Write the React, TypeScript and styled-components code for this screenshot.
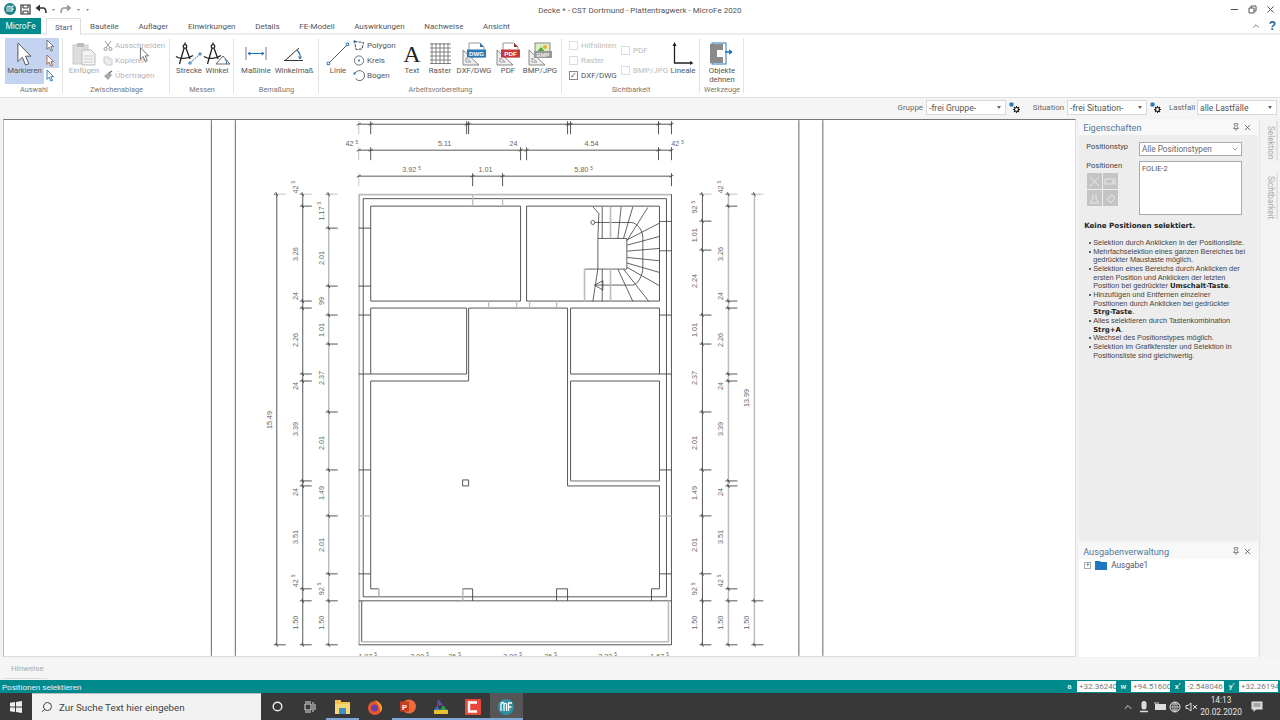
import React from "react";
import styled, { createGlobalStyle } from "styled-components";
import { ChevronUp, Search, X, Minus, Pin, ChevronDown } from "lucide-react";

const Global = createGlobalStyle`
  html, body { margin: 0; padding: 0; background: #f3f3f3; }
  * { box-sizing: border-box; }
`;
const UI = `Roboto, "Open Sans", sans-serif`;
const TEAL = "#008a8c";

const TextGlyph = styled.span`font-family: "Liberation Serif", serif; font-size: 24px; line-height: 24px; color: #222;`;
const Page = styled.div`
  width: 1280px; height: 720px; overflow: hidden; display: flex; flex-direction: column;
  font-family: ${UI}; font-size: 8.3px; color: #555; background: #f3f3f3; position: relative;
`;
const TitleBar = styled.div`
  height: 18px; background: #fff; display: grid; grid-template-columns: 1fr auto 1fr; align-items: center;
`;
const Quick = styled.div`display: flex; align-items: center; padding-left: 4px; gap: 4px;`;
const TitleText = styled.div`font-size: 8px; color: #555; padding-top: 2px;`;
const WinButtons = styled.div`display: flex; justify-content: flex-end; align-items: center; gap: 8px; padding-right: 4px; color: #444;`;
const TabBar = styled.div`
  height: 17px; background: #fff; display: flex; align-items: stretch; border-bottom: 2px solid #ededed; position: relative;
`;
const AppTab = styled.div`
  width: 41px; background: ${TEAL}; color: #e8ffff; font-size: 8.4px; display: flex; align-items: center; justify-content: center; margin-right: 5px; margin-bottom: -1px;
`;
const Tab = styled.div<{ $active?: boolean }>`
  display: flex; align-items: center; font-size: 8px; color: ${p => (p.$active ? "#45608a" : "#555")};
  padding: 2px 9.8px 0; height: ${p => (p.$active ? "17px" : "15px")}; white-space: nowrap;
  background: #fff; ${p => (p.$active ? "border: 1px solid #ddd; border-bottom: none; z-index: 1; padding: 1px 8px 0; margin-right: -1px;" : "")}
`;
const TabRight = styled.div`margin-left: auto; display: flex; align-items: center; gap: 8px; padding-right: 4px; color: #666;`;
const Help = styled.span`color: #1c5f96; font-weight: 700; font-size: 12px; line-height: 1; font-family: "Liberation Sans", sans-serif;`;

const Ribbon = styled.div`
  height: 63px; background: #fff; display: flex; padding-left: 5px; border-bottom: 1px solid #e0e0e0;
`;
const Group = styled.div<{ $w: number }>`
  width: ${p => p.$w}px; display: flex; flex-direction: column; position: relative;
  &::after { content: ""; position: absolute; right: 0; top: 3px; bottom: 4px; width: 1px; background: #e2e2e2; }
`;
const GroupBody = styled.div<{ $pl?: number }>`
  flex: 1; display: flex; padding-left: ${p => p.$pl ?? 0}px; min-height: 0;
`;
const GroupTitle = styled.div`height: 14px; text-align: center; font-size: 7.3px; color: #777; line-height: 14px;`;
const Tool = styled.div<{ $w: number; $sel?: boolean; $off?: boolean }>`
  width: ${p => p.$w}px; display: flex; flex-direction: column; align-items: center; padding-top: 2px;
  font-size: 7.8px; line-height: 8.5px; text-align: center; white-space: nowrap;
  color: ${p => (p.$off ? "#aaa" : "#555")};
  background: ${p => (p.$sel ? "#c4d3ef" : "transparent")};
  margin-top: 3px; height: 46px;
`;
const ToolIcon = styled.div`height: 27px; display: flex; align-items: center; justify-content: center;`;
const SmallCol = styled.div<{ $w: number }>`
  width: ${p => p.$w}px; display: flex; flex-direction: column; padding-top: 3px;
`;
const SmallRow = styled.div<{ $off?: boolean }>`
  height: 15px; display: flex; align-items: center; gap: 2px; white-space: nowrap; font-size: 8px;
  color: ${p => (p.$off ? "#b5b5b5" : "#555")};
`;
const SideSel = styled.div<{ $h: number }>`
  width: 15px; height: 45px; margin-top: 3px; position: relative; display: flex; flex-direction: column; align-items: center;
  &::before { content: ""; position: absolute; left: 0; top: 0; width: 15px; height: ${p => p.$h}px; background: #c4d3ef; }
`;
const SideCell = styled.div`height: 15px; display: flex; align-items: center; position: relative;`;
const CheckCol = styled.div<{ $w: number; $center?: boolean }>`
  width: ${p => p.$w}px; display: flex; flex-direction: column; padding-top: ${p => (p.$center ? "8px" : "3px")}; gap: ${p => (p.$center ? "5px" : "0")};
`;
const CheckRow = styled.div<{ $on?: boolean }>`
  height: 15px; display: flex; align-items: center; gap: 3px; font-size: 8px; white-space: nowrap; color: ${p => (p.$on ? "#555" : "#bbb")};
`;
const Box = styled.span<{ $on?: boolean }>`
  width: 9px; height: 9px; flex: none; border: 1px solid ${p => (p.$on ? "#888" : "#ddd")}; background: #fff; font-size: 8px; line-height: 7px; text-align: center; color: #555;
`;

const ToolBar = styled.div`
  height: 19px; display: flex; justify-content: flex-end; align-items: center; padding-right: 3px; background: #f5f5f5;
`;
const BarLabel = styled.span<{ $ml: number; $w: number }>`
  margin-left: ${p => p.$ml}px; width: ${p => p.$w}px; padding-right: 3px; text-align: right; font-size: 7.9px; color: #666; white-space: nowrap;
`;
const BarSelect = styled.div`
  width: 80px; height: 15px; background: #fff; border: 1px solid #d8d8d8; display: flex; align-items: center; justify-content: space-between;
  padding: 0 2px; font-size: 8.6px; color: #555;
`;
const Caret = styled.span`width: 0; height: 0; border-left: 2.5px solid transparent; border-right: 2.5px solid transparent; border-top: 3px solid #666; margin-right: 2px;`;
const GearSlot = styled.span`margin-left: 3px; display: flex;`;

const Main = styled.div`flex: 1; display: flex; min-height: 0; padding: 2px 0 1px 3px;`;
const Canvas = styled.div`
  width: 1074px; background: #fff; border-top: 1px solid #777; border-left: 1px solid #bbb; border-right: 1px solid #ddd; border-bottom: 1px solid #ddd; overflow: hidden; display: flex;
`;
const SideCol = styled.div`width: 179px; margin-left: 3px; display: flex; flex-direction: column; gap: 3px;`;
const Panel = styled.div<{ $white?: boolean; $h?: number }>`
  ${p => (p.$h ? `height:${p.$h}px;` : "flex: 1;")} background: ${p => (p.$white ? "#fff" : "#ededed")}; display: flex; flex-direction: column;
`;
const PanelHead = styled.div`
  height: 16px; background: #f8f8f8; display: flex; align-items: center; justify-content: space-between; padding: 0 6px 0 4px;
  font-size: 9.2px; color: #56799a;
`;
const HeadBtns = styled.div`display: flex; align-items: center; gap: 3px; color: #444;`;
const PanelBody = styled.div`padding: 7px 5px 0 7px; display: flex; flex-direction: column;`;
const FieldRow = styled.div`display: flex; justify-content: space-between; margin-right: 11px;`;
const FieldLabel = styled.div`font-size: 7.6px; color: #444;`;
const TypeSelect = styled.div`
  width: 103px; height: 14px; background: #fff; border: 1px solid #aaa; display: flex; justify-content: space-between; align-items: center; padding: 0 2px; font-size: 8.2px; color: #666;
`;
const PosRow = styled(FieldRow)`margin-top: 5px;`;
const PosLeft = styled.div`display: flex; flex-direction: column; gap: 3px;`;
const BtnGrid = styled.div`display: grid; grid-template-columns: 15px 15px; grid-auto-rows: 16px; gap: 1px; margin-left: 1px;`;
const GrayBtn = styled.div`background: #c4c4c4; display: flex; align-items: center; justify-content: center; color: #e9e9e9;`;
const ListBox = styled.div`
  width: 103px; height: 54px; background: #fff; border: 1px solid #aaa; padding: 2px; font-size: 7.4px; color: #555;
`;
const Heading = styled.div`
  margin: 5px 0 0 -2px; height: 11px; font-family: "DejaVu Sans", sans-serif; font-weight: 700; font-size: 7.1px; color: #222; line-height: 11px;
`;
const HelpList = styled.ul`
  list-style: none; padding: 0; margin: 8px 0 0 3px; font-family: "Liberation Sans", sans-serif; font-size: 7.35px; line-height: 8.67px; color: #444; white-space: nowrap;
`;
const HelpItem = styled.li`
  padding-left: 4px; position: relative;
  &::before { content: ""; position: absolute; left: 0; top: 3px; width: 2px; height: 2px; border-radius: 50%; background: #333; }
`;
const Strong = styled.b`font-family: "DejaVu Sans", sans-serif; font-size: 6.9px; color: #222;`;
const TreeRow = styled.div`display: flex; align-items: center; padding: 1px 0 0 5px; gap: 4px; font-size: 8.3px; color: #556;`;
const Plus = styled.span`width: 7px; height: 7px; border: 1px solid #aaa; font-size: 7px; line-height: 5px; text-align: center; color: #666;`;
const VStrip = styled.div`width: 21px; margin-left: 1px; display: flex; flex-direction: column; border-left: 1px solid #e4e4e4; padding-top: 2px;`;
const VTab = styled.div<{ $h: number }>`
  width: 18px; height: ${p => p.$h}px; writing-mode: vertical-rl; font-size: 8.2px; color: #aaa; padding: 3px 0 0 0; border-right: 2px solid #e2e2e2; margin-bottom: 12px; display: flex; align-items: flex-start; justify-content: center;
`;
const Hints = styled.div`
  height: 22px; background: #f5f5f5; padding: 6px 0 0 11px; font-size: 8px; color: #aaa; position: relative;
  &::after { content: ""; position: absolute; left: 3px; bottom: 1px; width: 44px; height: 1px; background: #ddd; }
`;
const Status = styled.div`
  height: 13px; background: ${TEAL}; display: flex; align-items: center; color: #eef; font-size: 8.1px; padding: 0 2px;
`;
const StatusRight = styled.div`margin-left: auto; display: flex; align-items: center;`;
const StatLabel = styled.span`width: 15px; text-align: center; color: #cfeeee; font-weight: 700; font-size: 8px;`;
const StatBox = styled.span`
  width: 39px; height: 11px; background: #fff; color: #777; font-size: 8px; line-height: 11px; padding-left: 2px; overflow: hidden; white-space: nowrap;
`;
const Taskbar = styled.div`height: 27px; background: #383838; display: flex; align-items: stretch;`;
const StartBtn = styled.div`width: 32px; display: flex; align-items: center; justify-content: center;`;
const SearchBox = styled.div`
  width: 229px; background: #f2f2f2; display: flex; align-items: center; gap: 6px; padding-left: 9px; font-size: 9.8px; color: #444; border-top: 1px solid #bbb;
`;
const TaskBtn = styled.div<{ $run?: boolean; $active?: boolean }>`
  width: 32.7px; display: flex; align-items: center; justify-content: center;
  background: ${p => (p.$active ? "#565656" : "transparent")};
  box-shadow: ${p => (p.$run ? "inset 0 -2px 0 #7fa6d8" : "none")};
`;
const Tray = styled.div`margin-left: auto; display: flex; align-items: center; color: #ddd;`;
const TrayIcon = styled.div`width: 15.7px; display: flex; justify-content: center;`;
const Clock = styled.div`width: 42px; margin-left: 1px; text-align: center; font-size: 8.3px; line-height: 11.5px; color: #e6e6e6;`;
const Notify = styled.div`width: 38px; padding: 0 10px 0 2px; display: flex; justify-content: center;`;
const Cursor = styled.svg`position: absolute; left: 139px; top: 47px;`;

/* ------ icons ------ */
const arrow = "M0 0L0 17L4 13L7 20L10 19L7 12L12 12Z";
const MiniArrow = ({ s = 0.55, c = "#666" }: { s?: number; c?: string }) => (
  <svg width="13" height="13" viewBox="0 0 13 13">
    <path d={arrow} transform={`translate(2 1) scale(${s})`} fill="#fff" stroke={c} strokeWidth="1.6" />
  </svg>
);
const BigCursor = () => (
  <svg width="18" height="24" viewBox="-1 -1 15 22">
    <path d={arrow} fill="#fff" stroke="#555" strokeWidth="0.9" />
  </svg>
);
const Compass = ({ children }: { children?: React.ReactNode }) => (
  <svg width="28" height="24" viewBox="0 0 28 24">
    <g stroke="#222" fill="none" strokeWidth="1.300">
      <circle cx="10" cy="4.500" r="1.800" />
      <path d="M10 0.500V2.700M9 6.200L4.500 22M11 6.200L15 17" />
      <path d="M1 14.500C5 17.500 13 17 18 13.500" />
    </g>
    {children}
  </svg>
);
const Strecke = () => (
  <Compass>
    <path d="M15 21L25 12" stroke="#1d6fb0" strokeWidth="1" strokeDasharray="2 1" />
    <circle cx="15" cy="21" r="1.200" fill="#fff" stroke="#1d6fb0" />
    <circle cx="25" cy="12" r="1.200" fill="#fff" stroke="#1d6fb0" />
  </Compass>
);
const WinkelI = () => (
  <Compass>
    <path d="M13 22H27L20 14Z" fill="none" stroke="#555" strokeWidth="0.900" />
    <path d="M22 17Q24 19 23.500 22" fill="none" stroke="#1d6fb0" />
  </Compass>
);
const Masslinie = () => (
  <svg width="22" height="13" viewBox="0 0 22 13">
    <path d="M1 0V13M21 0V13" stroke="#aab" strokeWidth="1.600" />
    <path d="M3 6.500H19M3 6.500L5.500 5M3 6.500L5.500 8M19 6.500L16.500 5M19 6.500L16.500 8" stroke="#1d6fb0" fill="none" />
  </svg>
);
const Winkelmass = () => (
  <svg width="20" height="14" viewBox="0 0 20 14">
    <path d="M0 13.500H19M1 13.500L15 1" stroke="#333" fill="none" />
    <path d="M13 3Q17 7 16 12" stroke="#1d6fb0" fill="none" strokeWidth="1.200" />
    <path d="M16 12L14.500 9.500M16 12L17.500 9.500" stroke="#1d6fb0" />
  </svg>
);
const LinieI = () => (
  <svg width="24" height="24" viewBox="0 0 24 24">
    <path d="M2.500 21.500L21.500 2.500" stroke="#444" strokeWidth="0.900" />
    <rect x="1.200" y="20.200" width="2.500" height="2.500" fill="#fff" stroke="#1d6fb0" strokeWidth="0.800" />
    <rect x="20.200" y="1.200" width="2.500" height="2.500" fill="#fff" stroke="#1d6fb0" strokeWidth="0.800" />
  </svg>
);
const PolyI = () => (
  <svg width="12" height="11" viewBox="0 0 12 11">
    <path d="M1.500 1.500L10.500 2.500L9 9L3 9.500Z" fill="none" stroke="#444" strokeDasharray="3 1" />
    <rect x="0.500" y="0.500" width="2" height="2" fill="#1d6fb0" />
  </svg>
);
const KreisI = () => (
  <svg width="12" height="11" viewBox="0 0 12 11">
    <circle cx="6" cy="5.500" r="4.600" fill="none" stroke="#555" strokeWidth="0.800" />
    <circle cx="6" cy="5.500" r="1" fill="#1d6fb0" />
  </svg>
);
const BogenI = () => (
  <svg width="12" height="11" viewBox="0 0 12 11">
    <path d="M2 3.500A5 5 0 1 1 2.500 8.500" fill="none" stroke="#444" strokeWidth="0.800" />
    <rect x="0.500" y="2.500" width="2" height="2" fill="#1d6fb0" />
  </svg>
);
const Raster = () => (
  <svg width="21" height="21" viewBox="0 0 21 21">
    <path d="M0 1H21M0 5H21M0 9H21M0 13H21M0 17H21M0 20.500H21M2 0V21M6 0V21M10 0V21M14 0V21M18 0V21" stroke="#555" strokeWidth="0.700" />
  </svg>
);
const DocBadge = ({ label, color, fold }: { label: string; color: string; fold: string }) => (
  <svg width="24" height="24" viewBox="0 0 24 24">
    <path d="M1 8L1 23L17 23Z" fill="#eee" stroke="#888" />
    <path d="M4 16L4 20L9 20Z" fill="#fff" stroke="#999" />
    <path d="M7 1H18L22 5V15H7Z" fill="#fff" stroke="#999" />
    <path d="M18 1L22 5H18Z" fill={fold} />
    <rect x="5" y="7.500" width="19" height="8" fill={color} />
    <text x="14.500" y="13.800" textAnchor="middle" fontSize="6.200" fontWeight="700" fontFamily="Liberation Sans" fill="#fff">{label}</text>
  </svg>
);
const BmpIcon = () => (
  <svg width="24" height="24" viewBox="0 0 24 24">
    <path d="M1 8L1 23L17 23Z" fill="#eee" stroke="#888" />
    <path d="M4 16L4 20L9 20Z" fill="#fff" stroke="#999" />
    <rect x="7" y="1" width="15" height="13" fill="#dff0c0" stroke="#888" />
    <circle cx="17" cy="5" r="2" fill="#e8b030" />
    <path d="M8 11L13 5L18 11Z" fill="#58a040" />
    <rect x="6" y="9" width="18" height="7" fill="#999" />
    <text x="15" y="14.600" textAnchor="middle" fontSize="5.800" fontWeight="700" fontFamily="Liberation Sans" fill="#eee">BMP</text>
  </svg>
);
const Lineale = () => (
  <svg width="22" height="24" viewBox="0 0 22 24">
    <path d="M2.500 3V21H20" fill="none" stroke="#222" strokeWidth="1.300" />
    <path d="M2.500 0L0.500 4H4.500ZM21.500 21L18 19V23Z" fill="#222" />
  </svg>
);
const Dehnen = () => (
  <svg width="24" height="23" viewBox="0 0 24 23">
    <rect x="2" y="1" width="14" height="21" fill="#fff" stroke="#2b78b6" />
    <path d="M0 2H13V8H7V15H13V21H0Z" fill="#8a8a8a" />
    <path d="M15 10H22M22 10L19 8M22 10L19 12" stroke="#1d6fb0" strokeWidth="1.300" fill="none" />
  </svg>
);
const Paste = () => (
  <svg width="24" height="24" viewBox="0 0 24 24">
    <rect x="1" y="3" width="15" height="19" fill="#ddd" stroke="#ccc" />
    <rect x="5" y="1" width="7" height="4" fill="#bbb" />
    <path d="M10 8H19L23 12V23H10Z" fill="#f4f4f4" stroke="#bbb" />
    <path d="M12 14H21M12 17H21M12 20H21" stroke="#ccc" />
  </svg>
);
const Gear = () => (
  <svg width="12" height="12" viewBox="0 0 12 12">
    <rect x="0.500" y="0.500" width="4" height="4" fill="#2b78b6" rx="1" />
    <circle cx="7.500" cy="7.500" r="2" fill="none" stroke="#222" strokeWidth="1.200" />
    <path d="M7.500 4V5.200M7.500 9.800V11M4 7.500H5.200M9.800 7.500H11M5 5L5.900 5.900M9.100 9.100L10 10M10 5L9.100 5.900M5.900 9.100L5 10" stroke="#222" strokeWidth="1.100" />
  </svg>
);
const TinyDoc = () => (
  <svg width="10" height="10" viewBox="0 0 10 10"><path d="M1 1H6V3H9V9H3V7H1Z" fill="#eee" stroke="#ccc" /></svg>
);
const Scissors = () => (
  <svg width="10" height="11" viewBox="0 0 10 11"><path d="M2 1L7 8M8 1L3 8" stroke="#999" /><circle cx="2.500" cy="9" r="1.500" fill="none" stroke="#999" /><circle cx="7.500" cy="9" r="1.500" fill="none" stroke="#999" /></svg>
);
const Brush = () => (
  <svg width="10" height="11" viewBox="0 0 10 11"><path d="M1 6L5 10L9 5L6 2Z" fill="#aaa" /><path d="M6 3L9 1" stroke="#777" strokeWidth="1.500" /></svg>
);
const Mini = ({ kind }: { kind: number }) => (
  <svg width="13" height="13" viewBox="0 0 13 13">
    {kind === 0 && <path d="M2 2L11 11M11 2L2 11" stroke="currentColor" />}
    {kind === 1 && <path d="M1 4H9V9H1ZM11 3V10" stroke="currentColor" fill="none" />}
    {kind === 2 && <path d="M5 2V7L2 11H11L8 7V2" stroke="currentColor" fill="none" />}
    {kind === 3 && <path d="M3 7L7 11L11 6L8 3Z" stroke="currentColor" fill="none" />}
  </svg>
);

/* quick bar */
const Logo = () => (
  <svg width="12" height="12" viewBox="0 0 12 12">
    <circle cx="6" cy="6" r="6" fill="#1d7f86" />
    <path d="M3 9V4A1 1 0 0 1 5 4V9M5 4A1 1 0 0 1 7 4V9M8 9V3H10M8 6H10" stroke="#fff" fill="none" strokeWidth="0.900" />
  </svg>
);
const Save = () => (
  <svg width="11" height="11" viewBox="0 0 11 11">
    <path d="M1 1H10V10H1Z" fill="none" stroke="#333" strokeWidth="1.200" />
    <path d="M3 1V4H8V1M3 10V7H8V10" fill="none" stroke="#333" />
  </svg>
);
const Undo = ({ c, flip }: { c: string; flip?: boolean }) => (
  <svg width="12" height="10" viewBox="0 0 12 10">
    <g transform={flip ? "translate(12 0) scale(-1 1)" : ""}>
      <path d="M0.500 4L5 0.500V7.500Z" fill={c} />
      <path d="M4 4H8C10 4 11 6 11 9" fill="none" stroke={c} strokeWidth="1.600" />
    </g>
  </svg>
);
const Dot = () => <svg width="5" height="5" viewBox="0 0 5 5"><path d="M1 2H4L2.500 4Z" fill="#888" /></svg>;
const Restore = () => (
  <svg width="9" height="9" viewBox="0 0 9 9"><path d="M1 3H6V8H1ZM3 3V1H8V6H6" fill="none" stroke="#555" /></svg>
);

/* taskbar */
const WinLogo = () => (
  <svg width="12" height="12" viewBox="0 0 12 12">
    <path d="M0 1.800L5 1V5.600H0ZM6 .900L12 0V5.600H6ZM0 6.400H5V11L0 10.200ZM6 6.400H12V12L6 11.100Z" fill="#eee" />
  </svg>
);
const TaskView = () => (
  <svg width="12" height="12" viewBox="0 0 12 12"><path d="M1 3H7V9H1ZM1 1H7M1 11H7M9 1V11M11 3V9" fill="none" stroke="#ddd" /></svg>
);
const Explorer = () => (
  <svg width="15" height="14" viewBox="0 0 15 14">
    <path d="M0 0H6V2H15V14H0Z" fill="#f2c14e" />
    <rect x="0" y="4" width="15" height="10" fill="#f8d775" />
    <rect x="4" y="8" width="7" height="6" fill="#3f8fcf" />
  </svg>
);
const Firefox = () => (
  <svg width="16" height="16" viewBox="0 0 16 16">
    <circle cx="8" cy="9" r="7" fill="#e8552a" />
    <path d="M8 1C12 3 15 6 15 9C15 11 14 12 13 13C14 9 11 5 8 1Z" fill="#f7a823" />
    <circle cx="7.500" cy="9" r="3.500" fill="#6b3fa8" />
  </svg>
);
const Ppt = () => (
  <svg width="16" height="15" viewBox="0 0 16 15">
    <circle cx="9" cy="7.500" r="7" fill="#ec6a3c" />
    <rect x="0" y="2.500" width="9" height="10" fill="#c43e1c" />
    <text x="4.500" y="10.500" textAnchor="middle" fontSize="7.500" fontWeight="700" fontFamily="Liberation Sans" fill="#fff">P</text>
  </svg>
);
const AppMulti = () => (
  <svg width="15" height="16" viewBox="0 0 15 16">
    <path d="M5 0L10 6L4 7Z" fill="#6a4aa0" />
    <path d="M10 6L14 11H7Z" fill="#2d9a5a" />
    <path d="M4 7L7 11H1Z" fill="#3a6fc0" />
    <rect x="1" y="11" width="14" height="4" fill="#e8c02e" />
  </svg>
);
const Camtasia = () => (
  <svg width="16" height="16" viewBox="0 0 16 16">
    <rect width="16" height="16" fill="#e8483a" rx="1" />
    <path d="M12 3.500H4V12.500H12" fill="none" stroke="#fff" strokeWidth="2.400" />
  </svg>
);
const MfTask = () => (
  <svg width="16" height="16" viewBox="0 0 16 16">
    <circle cx="8" cy="8" r="8" fill="#2d8fa0" />
    <path d="M3 12V5A1.500 1.500 0 0 1 6 5V12M6 5A1.500 1.500 0 0 1 8.500 5V12M10.500 12V4H14M10.500 8H13.500" fill="none" stroke="#fff" strokeWidth="1.300" />
  </svg>
);
const Mic = () => <svg width="8" height="12" viewBox="0 0 8 12"><rect x="1.500" width="5" height="8.500" rx="2.500" fill="#ddd" /><path d="M0 10.500H8" stroke="#ddd" strokeWidth="1.500" /></svg>;
const Batt = () => <svg width="12" height="9" viewBox="0 0 12 9"><rect x="1" y="2" width="11" height="6" fill="#ddd" /><path d="M0 1H5" stroke="#ddd" /></svg>;
const Globe = () => <svg width="12" height="12" viewBox="0 0 12 12"><circle cx="6" cy="6" r="5" fill="none" stroke="#ddd" /><path d="M1 6H11M6 1V11M2 3H10M2 9H10M6 1C3 4 3 8 6 11C9 8 9 4 6 1" stroke="#ddd" fill="none" strokeWidth="0.700" /></svg>;
const Speaker = () => <svg width="13" height="10" viewBox="0 0 13 10"><path d="M1 3.500H3L6 1V9L3 6.500H1Z" fill="none" stroke="#ddd" /><path d="M8 3L12 7M12 3L8 7" stroke="#ddd" /></svg>;
const Note = () => <svg width="12" height="12" viewBox="0 0 12 12"><path d="M0.500 0.500H11.500V8.500H5L2.500 11V8.500H0.500Z" fill="#ddd" /><path d="M2.500 3H9.500M2.500 5H9.500" stroke="#444" strokeWidth="0.700" /></svg>;

/* ------ drawing ------ */
const INK = "#444";
const WALL = "#bcbcbc";
const DimText = ({ x, y, t, sup, rot }: { x: number; y: number; t: string; sup?: boolean; rot?: boolean }) => (
  <text x={x} y={y} textAnchor="middle" fontSize="7.200" fontFamily="Liberation Sans" fill="#666" transform={rot ? `rotate(-90 ${x} ${y})` : undefined}>
    {t}
    {sup && <tspan dx="2" dy="-2.500" fontSize="4.800">5</tspan>}
  </text>
);
const Seg = ({ d, c = INK, w = 0.9 }: { d: string; c?: string; w?: number }) => (
  <path d={d} stroke={c} strokeWidth={w} fill="none" />
);
const HDim = ({ y, x1, x2, ticks }: { y: number; x1: number; x2: number; ticks: number[] }) => (
  <g>
    <Seg d={`M${x1} ${y}H${x2}`} />
    {ticks.map((t, i) => (
      <g key={i}>
        <Seg d={`M${t} ${y - 3}V${y + 10}`} c={i === 0 ? WALL : INK} />
        <Seg d={`M${t - 2} ${y + 1}L${t + 2} ${y - 1}`} />
      </g>
    ))}
  </g>
);
const VDim = ({ x, ticks, gray }: { x: number; ticks: number[]; gray?: boolean }) => (
  <g>
    <Seg d={`M${x} 195V646`} c={gray ? WALL : INK} w={gray ? 1.500 : 0.900} />
    {ticks.map((t, i) => (
      <g key={i}>
        <Seg d={`M${x - 1} ${t}H${x + 9}`} c={i === 0 ? WALL : INK} />
        <Seg d={`M${x - 3} ${t}H${x}`} />
        <Seg d={`M${x - 1} ${t - 2}L${x + 1} ${t + 2}`} />
      </g>
    ))}
  </g>
);
const A = [195, 207, 302, 309, 375, 382, 482, 487, 590, 602, 646];
const B = [195, 229, 287, 316, 345, 413, 471, 517, 575, 602, 646];
const Br = [195, 222, 251, 316, 345, 413, 471, 517, 575, 602, 646];
const labelsA: [string, number, boolean?][] = [["42", 188, true], ["3.26", 255], ["24", 297], ["2.26", 341], ["24", 387], ["3.39", 430], ["24", 493], ["3.51", 538], ["42", 582, true], ["1.50", 624]];
const labelsB: [string, number, boolean?][] = [["1.17", 212, true], ["2.01", 259], ["99", 302], ["1.01", 331], ["2.37", 379], ["2.01", 444], ["1.49", 494], ["2.01", 546], ["92", 590, true], ["1.50", 624]];
const labelsBr: [string, number, boolean?][] = [["92", 208, true], ["1.01", 236], ["2.24", 282], ["1.01", 331], ["2.37", 379], ["2.01", 444], ["1.49", 494], ["2.01", 546], ["92", 590, true], ["1.50", 624]];
const stairTreads = [
  "M368 263V358", "M425 263L415 358", "M460 263L432 358", "M505 265L442 365",
  "M540 312L443 362", "M540 352L443 378", "M540 388L443 396", "M540 425L443 415", "M540 460L443 432", "M540 500L443 445",
  "M508 547L432 450", "M460 547L415 450", "M368 450V547",
  "M340 263L358 283L355 358", "M355 450L340 547", "M340 310H455C475 312 490 335 490 355V445C490 470 475 496 460 498H345",
  "M355 358H442V450H355Z", "M355 450H315", "M540 307H577", "M540 395H577",
];
const bottomLabels: [string, number][] = [["1.07", 368], ["3.00", 420], ["36", 455], ["3.00", 513], ["36", 551], ["3.32", 608], ["1.67", 660]];
const sheetLines = [211, 235, 799, 823];

const Drawing = () => (
  <svg width="1072" height="536" viewBox="4 121 1072 536">
    {sheetLines.map(x => <Seg key={x} d={`M${x + 0.5} 121V657`} c="#555" />)}
    <HDim y={125} x1={359} x2={672} ticks={[359, 371, 467, 469, 568, 571, 659, 672]} />
    <HDim y={151} x1={359} x2={672} ticks={[359, 371, 521, 527, 659, 672]} />
    <HDim y={177} x1={359} x2={672} ticks={[359, 473, 503, 672]} />
    <DimText x={352} y={147} t="42" sup />
    <DimText x={445} y={147} t="5.11" />
    <DimText x={514} y={147} t="24" />
    <DimText x={592} y={147} t="4.54" />
    <DimText x={678} y={147} t="42" sup />
    <DimText x={412} y={173} t="3.92" sup />
    <DimText x={486} y={173} t="1.01" />
    <DimText x={584} y={173} t="5.80" sup />

    <VDim x={277} ticks={[195, 646]} />
    <VDim x={303} ticks={A} />
    <VDim x={329} ticks={B} gray />
    <VDim x={703} ticks={Br} />
    <VDim x={729} ticks={A} gray />
    <VDim x={755} ticks={[195, 602, 646]} gray />
    <DimText x={272} y={421} t="15.49" rot />
    <DimText x={750} y={399} t="13.99" rot />
    <DimText x={750} y={624} t="1.50" rot />
    {labelsA.map(([t, y, s], i) => <DimText key={i} x={298} y={y} t={t} sup={s} rot />)}
    {labelsB.map(([t, y, s], i) => <DimText key={i} x={324} y={y} t={t} sup={s} rot />)}
    {labelsBr.map(([t, y, s], i) => <DimText key={i} x={698} y={y} t={t} sup={s} rot />)}
    {labelsA.map(([t, y, s], i) => <DimText key={i} x={724} y={y} t={t} sup={s} rot />)}

    {/* outer walls */}
    <Seg d="M359.500 646V195.500H672" c={WALL} w={1.800} />
    <Seg d="M672 195V646H359" />
    <Seg d="M363.500 598V199.500H667V598" />
    <Seg d="M363.500 598H667" />
    <Seg d="M359 602H672" />
    <Seg d="M362 602V643" />
    <Seg d="M362 643H669V602" c={WALL} w={1.600} />
    {/* rooms */}
    <path d="M371 207H521V302H371ZM527 207H660V302H527ZM371 309H467V375H371ZM571 309H660V375H571ZM571 382H660V482H571Z" fill="none" stroke={INK} strokeWidth="0.900" />
    <Seg d="M571 482H660" c={WALL} w={1.600} />
    <Seg d="M469 309V382H371V590H379V598" />
    <Seg d="M379 590V598" c={WALL} w={1.400} />
    <Seg d="M469 309H568V487H660V590H652V602" />
    <Seg d="M463 602V590H473V602" />
    <Seg d="M463 590V602" c={WALL} w={1.400} />
    <Seg d="M557 602V590H568V602" />
    <path d="M463 481H469V487H463Z" fill="#fff" stroke={INK} strokeWidth="0.900" />
    {/* wall joints */}
    <Seg d="M359 229H371M359 287H371M359 316H371M359 375H371M359 471H371M359 575H371" />
    <Seg d="M359 517H371" c={WALL} w={1.400} />
    <Seg d="M660 316H672M660 375H672M660 471H672M660 575H672" />
    <Seg d="M660 517H672" c={WALL} w={1.400} />
    <Seg d="M473 195V207M503 199V207M489 302V309M517 302V309M530 302V309M557 302V309" c={WALL} w={1.300} />
    {/* stairs */}
    <g transform="translate(480 120) scale(0.33333)">
      {stairTreads.map((d, i) => <path key={i} d={d} stroke={INK} strokeWidth="2.500" fill="none" />)}
      <path d="M393 263V358M393 450V547M315 450V547" stroke={WALL} strokeWidth="5" fill="none" />
      <circle cx="340" cy="310" r="6" fill="#fff" stroke={INK} strokeWidth="2.500" />
      <path d="M345 498L370 485V513Z" fill="none" stroke={INK} strokeWidth="2.500" />
    </g>
    {bottomLabels.map(([t, x], i) => <DimText key={i} x={x} y={660} t={t} sup />)}
  </svg>
);

const tabs = ["Bauteile", "Auflager", "Einwirkungen", "Details", "FE-Modell", "Auswirkungen", "Nachweise", "Ansicht"];
const stats: [string, string][] = [["a", "+32.36240"], ["w", "+94.51600"], ["x'", "-2.548046"], ["y'", "+32.26194"]];

export default function App() {
  return (
    <Page>
      <Global />
      <TitleBar>
        <Quick>
          <Logo />
          <Save />
          <Undo c="#333" />
          <Dot />
          <Undo c="#999" flip />
          <Dot />
          <Dot />
        </Quick>
        <TitleText>Decke * - CST Dortmund - Plattentragwerk - MicroFe 2020</TitleText>
        <WinButtons>
          <Minus size={11} />
          <Restore />
          <X size={11} />
        </WinButtons>
      </TitleBar>
      <TabBar>
        <AppTab>MicroFe</AppTab>
        <Tab $active>Start</Tab>
        {tabs.map(t => <Tab key={t}>{t}</Tab>)}
        <TabRight><ChevronUp size={10} /><Help>?</Help></TabRight>
      </TabBar>
      <Ribbon>
        <Group $w={58}>
          <GroupBody>
            <Tool $w={39} $sel><ToolIcon><BigCursor /></ToolIcon>Markieren</Tool>
            <SideSel $h={30}>
              <SideCell><MiniArrow /></SideCell>
              <SideCell><MiniArrow c="#a06030" /></SideCell>
              <SideCell><MiniArrow c="#1d6fb0" /></SideCell>
            </SideSel>
          </GroupBody>
          <GroupTitle>Auswahl</GroupTitle>
        </Group>
        <Group $w={107}>
          <GroupBody $pl={2}>
            <Tool $w={38} $off><ToolIcon><Paste /></ToolIcon>Einfügen</Tool>
            <SmallCol $w={66}>
              <SmallRow $off><Scissors />Ausschneiden</SmallRow>
              <SmallRow $off><TinyDoc />Kopieren</SmallRow>
              <SmallRow $off><Brush />Übertragen</SmallRow>
            </SmallCol>
          </GroupBody>
          <GroupTitle>Zwischenablage</GroupTitle>
        </Group>
        <Group $w={64}>
          <GroupBody $pl={5}>
            <Tool $w={28}><ToolIcon><Strecke /></ToolIcon>Strecke</Tool>
            <Tool $w={28}><ToolIcon><WinkelI /></ToolIcon>Winkel</Tool>
          </GroupBody>
          <GroupTitle>Messen</GroupTitle>
        </Group>
        <Group $w={85}>
          <GroupBody $pl={3}>
            <Tool $w={38}><ToolIcon><Masslinie /></ToolIcon>Maßlinie</Tool>
            <Tool $w={38}><ToolIcon><Winkelmass /></ToolIcon>Winkelmaß</Tool>
          </GroupBody>
          <GroupTitle>Bemaßung</GroupTitle>
        </Group>
        <Group $w={243}>
          <GroupBody $pl={4}>
            <Tool $w={30}><ToolIcon><LinieI /></ToolIcon>Linie</Tool>
            <SmallCol $w={46}>
              <SmallRow><PolyI />Polygon</SmallRow>
              <SmallRow><KreisI />Kreis</SmallRow>
              <SmallRow><BogenI />Bogen</SmallRow>
            </SmallCol>
            <Tool $w={26}>
              <ToolIcon><TextGlyph>A</TextGlyph></ToolIcon>Text
            </Tool>
            <Tool $w={30}><ToolIcon><Raster /></ToolIcon>Raster</Tool>
            <Tool $w={38}><ToolIcon><DocBadge label="DWG" color="#2b78b6" fold="#2b78b6" /></ToolIcon>DXF/DWG</Tool>
            <Tool $w={30}><ToolIcon><DocBadge label="PDF" color="#c8383a" fold="#a03030" /></ToolIcon>PDF</Tool>
            <Tool $w={34}><ToolIcon><BmpIcon /></ToolIcon>BMP/JPG</Tool>
          </GroupBody>
          <GroupTitle>Arbeitsvorbereitung</GroupTitle>
        </Group>
        <Group $w={138}>
          <GroupBody $pl={7}>
            <CheckCol $w={52}>
              <CheckRow><Box />Hilfslinien</CheckRow>
              <CheckRow><Box />Raster</CheckRow>
              <CheckRow $on><Box $on>✓</Box>DXF/DWG</CheckRow>
            </CheckCol>
            <CheckCol $w={48} $center>
              <CheckRow><Box />PDF</CheckRow>
              <CheckRow><Box />BMP/JPG</CheckRow>
            </CheckCol>
            <Tool $w={28}><ToolIcon><Lineale /></ToolIcon>Lineale</Tool>
          </GroupBody>
          <GroupTitle>Sichtbarkeit</GroupTitle>
        </Group>
        <Group $w={44}>
          <GroupBody>
            <Tool $w={44}><ToolIcon><Dehnen /></ToolIcon>Objekte<br />dehnen</Tool>
          </GroupBody>
          <GroupTitle>Werkzeuge</GroupTitle>
        </Group>
      </Ribbon>
      <ToolBar>
        <BarLabel $ml={0} $w={29}>Gruppe</BarLabel>
        <BarSelect>-frei Gruppe-<Caret /></BarSelect>
        <GearSlot><Gear /></GearSlot>
        <BarLabel $ml={11} $w={35}>Situation</BarLabel>
        <BarSelect>-frei Situation-<Caret /></BarSelect>
        <GearSlot><Gear /></GearSlot>
        <BarLabel $ml={7} $w={28}>Lastfall</BarLabel>
        <BarSelect>alle Lastfälle<Caret /></BarSelect>
      </ToolBar>
      <Main>
        <Canvas><Drawing /></Canvas>
        <SideCol>
          <Panel>
            <PanelHead>
              Eigenschaften
              <HeadBtns><Pin size={8} /><X size={9} /></HeadBtns>
            </PanelHead>
            <PanelBody>
              <FieldRow>
                <FieldLabel>Positionstyp</FieldLabel>
                <TypeSelect>Alle Positionstypen<ChevronDown size={8} /></TypeSelect>
              </FieldRow>
              <PosRow>
                <PosLeft>
                  <FieldLabel>Positionen</FieldLabel>
                  <BtnGrid>
                    {[0, 1, 2, 3].map(k => <GrayBtn key={k}><Mini kind={k} /></GrayBtn>)}
                  </BtnGrid>
                </PosLeft>
                <ListBox>FOLIE-2</ListBox>
              </PosRow>
              <Heading>Keine Positionen selektiert.</Heading>
              <HelpList>
                <HelpItem>Selektion durch Anklicken in der Positionsliste.</HelpItem>
                <HelpItem>Mehrfachselektion eines ganzen Bereiches bei<br />gedrückter Maustaste möglich.</HelpItem>
                <HelpItem>Selektion eines Bereichs durch Anklicken der<br />ersten Position und Anklicken der letzten<br />Position bei gedrückter <Strong>Umschalt-Taste</Strong>.</HelpItem>
                <HelpItem>Hinzufügen und Entfernen einzelner<br />Positionen durch Anklicken bei gedrückter<br /><Strong>Strg-Taste</Strong>.</HelpItem>
                <HelpItem>Alles selektieren durch Tastenkombination<br /><Strong>Strg+A</Strong>.</HelpItem>
                <HelpItem>Wechsel des Positionstypes möglich.</HelpItem>
                <HelpItem>Selektion im Grafikfenster und Selektion in<br />Positionsliste sind gleichwertig.</HelpItem>
              </HelpList>
            </PanelBody>
          </Panel>
          <Panel $white $h={114}>
            <PanelHead>
              Ausgabenverwaltung
              <HeadBtns><Pin size={8} /><X size={9} /></HeadBtns>
            </PanelHead>
            <TreeRow>
              <Plus>+</Plus>
              <svg width="12" height="9" viewBox="0 0 12 9"><path d="M0 0H5L6 1H12V9H0Z" fill="#1f77c4" /></svg>
              Ausgabe1
            </TreeRow>
          </Panel>
        </SideCol>
        <VStrip>
          <VTab $h={40}>Selektion</VTab>
          <VTab $h={46}>Sichtbarkeit</VTab>
        </VStrip>
      </Main>
      <Hints>Hinweise</Hints>
      <Status>
        Positionen selektieren
        <StatusRight>
          {stats.map(([l, v]) => (
            <React.Fragment key={l}>
              <StatLabel>{l}</StatLabel>
              <StatBox>{v}</StatBox>
            </React.Fragment>
          ))}
        </StatusRight>
      </Status>
      <Taskbar>
        <StartBtn><WinLogo /></StartBtn>
        <SearchBox><Search size={12} style={{ transform: "scaleX(-1)" }} />Zur Suche Text hier eingeben</SearchBox>
        <TaskBtn><svg width="11" height="11" viewBox="0 0 11 11"><circle cx="5.500" cy="5.500" r="4.300" fill="none" stroke="#eee" strokeWidth="1.400" /></svg></TaskBtn>
        <TaskBtn><TaskView /></TaskBtn>
        <TaskBtn $run><Explorer /></TaskBtn>
        <TaskBtn><Firefox /></TaskBtn>
        <TaskBtn $run><Ppt /></TaskBtn>
        <TaskBtn $run><AppMulti /></TaskBtn>
        <TaskBtn $run><Camtasia /></TaskBtn>
        <TaskBtn $run $active><MfTask /></TaskBtn>
        <Tray>
          <TrayIcon><ChevronUp size={12} /></TrayIcon>
          <TrayIcon><Mic /></TrayIcon>
          <TrayIcon><Batt /></TrayIcon>
          <TrayIcon><Globe /></TrayIcon>
          <TrayIcon><Speaker /></TrayIcon>
          <Clock>14:13<br />20.02.2020</Clock>
          <Notify><Note /></Notify>
        </Tray>
      </Taskbar>
      <Cursor width="11" height="15" viewBox="-1 -1 14 22"><path d={arrow} fill="#fff" stroke="#555" strokeWidth="1.200" /></Cursor>
    </Page>
  );
}
